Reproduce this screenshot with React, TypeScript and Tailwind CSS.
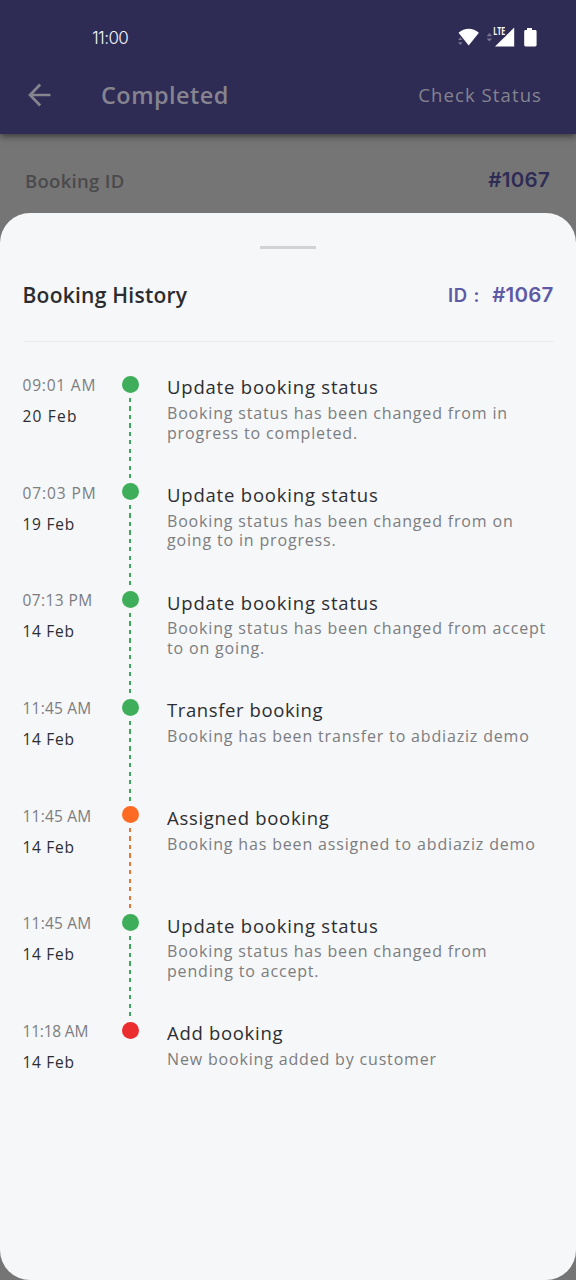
type Tone = 'green' | 'orange' | 'red';

interface HistoryItem {
  time: string;
  timeClass: string;
  date: string;
  dateClass: string;
  title: string;
  titleClass: string;
  lines: string[];
  tone: Tone;
}

const dotTone: Record<Tone, string> = {
  green: 'bg-[#3fae5b]',
  orange: 'bg-[#fd6a24]',
  red: 'bg-[#ec2d30]',
};

const lineTone: Record<Tone, string> = {
  green: 'text-[#3fa65c]',
  orange: 'text-[#e87537]',
  red: 'text-[#ec2d30]',
};

const items: HistoryItem[] = [
  { time: '09:01 AM', timeClass: 'tracking-[0.8px]', date: '20 Feb', dateClass: 'tracking-[1.2px]', title: 'Update booking status', titleClass: 'tracking-[0.8px]', lines: ['Booking status has been changed from in', 'progress to completed.'], tone: 'green' },
  { time: '07:03 PM', timeClass: 'tracking-[0.9px]', date: '19 Feb', dateClass: 'tracking-[0.75px]', title: 'Update booking status', titleClass: 'tracking-[0.8px]', lines: ['Booking status has been changed from on', 'going to in progress.'], tone: 'green' },
  { time: '07:13 PM', timeClass: 'tracking-[0.4px]', date: '14 Feb', dateClass: 'tracking-[0.7px]', title: 'Update booking status', titleClass: 'tracking-[0.8px]', lines: ['Booking status has been changed from accept', 'to on going.'], tone: 'green' },
  { time: '11:45 AM', timeClass: 'tracking-[0.2px]', date: '14 Feb', dateClass: 'tracking-[0.7px]', title: 'Transfer booking', titleClass: 'tracking-[0.6px]', lines: ['Booking has been transfer to abdiaziz demo'], tone: 'green' },
  { time: '11:45 AM', timeClass: 'tracking-[0.2px]', date: '14 Feb', dateClass: 'tracking-[0.7px]', title: 'Assigned booking', titleClass: 'tracking-[0.7px]', lines: ['Booking has been assigned to abdiaziz demo'], tone: 'orange' },
  { time: '11:45 AM', timeClass: 'tracking-[0.2px]', date: '14 Feb', dateClass: 'tracking-[0.7px]', title: 'Update booking status', titleClass: 'tracking-[0.8px]', lines: ['Booking status has been changed from', 'pending to accept.'], tone: 'green' },
  { time: '11:18 AM', timeClass: 'tracking-[-0.2px]', date: '14 Feb', dateClass: 'tracking-[0.7px]', title: 'Add booking', titleClass: 'tracking-[0.7px]', lines: ['New booking added by customer'], tone: 'red' },
];

function StatusIcons() {
  return (
    <svg className="-my-1" width="84" height="32" viewBox="0 -4 84 32" aria-hidden="true">
      <path d="M2.5 6.7C8.8 1.3 16.6 1.3 22.9 6.7L12.7 19.4Z" fill="#fff" />
      <path d="M2 14.1 4.3 11.3 6.6 14.1ZM2 16.2 6.6 16.2 4.3 19Z" fill="#77758f" />
      <path d="M30.6 10.2 33.4 7 36.2 10.2ZM30.6 12.4 36.2 12.4 33.4 15.6Z" fill="#77758f" />
      <path d="M58.2 1.6V20.4H39Z" fill="#fff" />
      <text x="37.2" y="9.2" fill="#fff" stroke="#2e2b55" strokeWidth="2.4" paintOrder="stroke" fontFamily="Open Sans, sans-serif" fontSize="10.5" fontWeight="700" textLength="12" lengthAdjust="spacingAndGlyphs">LTE</text>
      <path d="M71 2h5v2h3.2c.8 0 1.4.6 1.4 1.4v13.6c0 .8-.6 1.4-1.4 1.4H69.6c-.8 0-1.4-.6-1.4-1.4V5.4c0-.8.6-1.4 1.4-1.4H71Z" fill="#fff" />
    </svg>
  );
}

function TimelineRow({ item, last }: { item: HistoryItem; last: boolean }) {
  return (
    <li className="flex h-[107.7px]">
      <div className="-mt-[0.5px] w-[98.5px] whitespace-nowrap">
        <div className={`text-[15.5px] leading-[20px] text-[#7c7d80] ${item.timeClass}`}>{item.time}</div>
        <div className={`mt-[11px] text-[15.5px] leading-[20px] text-[#2d2e31] ${item.dateClass}`}>{item.date}</div>
      </div>
      <div className="flex w-[18px] flex-col items-center">
        <div className={`size-[17px] shrink-0 rounded-full ${dotTone[item.tone]}`} />
        {!last && (
          <div
            className={`mt-[5px] h-[80.3px] w-[2px] bg-[repeating-linear-gradient(to_bottom,currentColor_0px,currentColor_4.2px,transparent_4.2px,transparent_8.45px)] ${lineTone[item.tone]}`}
          />
        )}
      </div>
      <div className="ml-[28px] whitespace-nowrap">
        <div className={`-mt-[0.3px] text-[18.5px] leading-[24px] text-[#2d2e31] ${item.titleClass}`}>{item.title}</div>
        <div className="mt-[4.7px] text-[16px] leading-[19.8px] tracking-[0.83px] text-[#7c7d80]">
          {item.lines.map((line) => (
            <div key={line}>{line}</div>
          ))}
        </div>
      </div>
    </li>
  );
}

export default function App() {
  return (
    <div className="flex h-[1280px] w-[576px] flex-col overflow-hidden bg-[#757575] font-['Open_Sans',sans-serif]">
      <header className="flex h-[134px] shrink-0 flex-col bg-[#2e2b55] shadow-[0_2px_7px_rgba(0,0,0,0.55)]">
        <div className="flex items-center justify-between pt-[25px] pr-[36px] pl-[92px]">
          <span className="pt-px font-['Inter',sans-serif] text-[17px] leading-[24px] font-light tracking-[-0.6px] text-[#f4f4fa]">11:00</span>
          <StatusIcons />
        </div>
        <div className="flex items-center pt-[25px] pr-[34px] pl-[28px] text-[#85848f]">
          <svg width="23" height="40" viewBox="0 0 23 40" fill="none" stroke="currentColor" strokeWidth="2.7" aria-hidden="true">
            <path d="M12.2 9.5 2 20 12.2 30.5M2 20H22.5" />
          </svg>
          <h1 className="-mt-px ml-[50px] text-[23.5px] leading-[32px] font-semibold tracking-[0.45px]">Completed</h1>
          <span className="ml-auto text-[18.5px] leading-[26px] tracking-[1.1px]">Check Status</span>
        </div>
      </header>
      <div className="flex h-[79px] shrink-0 items-center justify-between pt-[14px] pr-[26px] pl-[25px]">
        <span className="text-[18.5px] leading-[26px] font-semibold tracking-[0.3px] text-[#4a4a4c]">Booking ID</span>
        <span className="-mt-px font-['Inter',sans-serif] text-[20.5px] leading-[26px] font-semibold tracking-[0.3px] text-[#2e2b55]">#1067</span>
      </div>
      <main className="flex min-h-0 flex-1 flex-col rounded-[30px] bg-[#f6f7f9] px-[22.5px]">
        <div className="mt-[33px] h-[3px] w-[56px] self-center bg-[#d1d2d4]" />
        <div className="mt-[31px] flex h-[30px] items-center justify-between">
          <h2 className="text-[21px] leading-[30px] font-semibold tracking-[0.25px] text-[#2b2c2f]">Booking History</h2>
          <div className="flex items-center font-['Inter',sans-serif] font-semibold text-[#5e5aa5]">
            <span className="pt-px text-[18.5px] tracking-[0.8px]">ID :</span>
            <span className="ml-[12px] text-[20.5px] tracking-[0.2px]">#1067</span>
          </div>
        </div>
        <div className="mt-[31px] h-px bg-[#ebecef]" />
        <ul className="mt-[33.5px]">
          {items.map((item, i) => (
            <TimelineRow key={i} item={item} last={i === items.length - 1} />
          ))}
        </ul>
      </main>
    </div>
  );
}
